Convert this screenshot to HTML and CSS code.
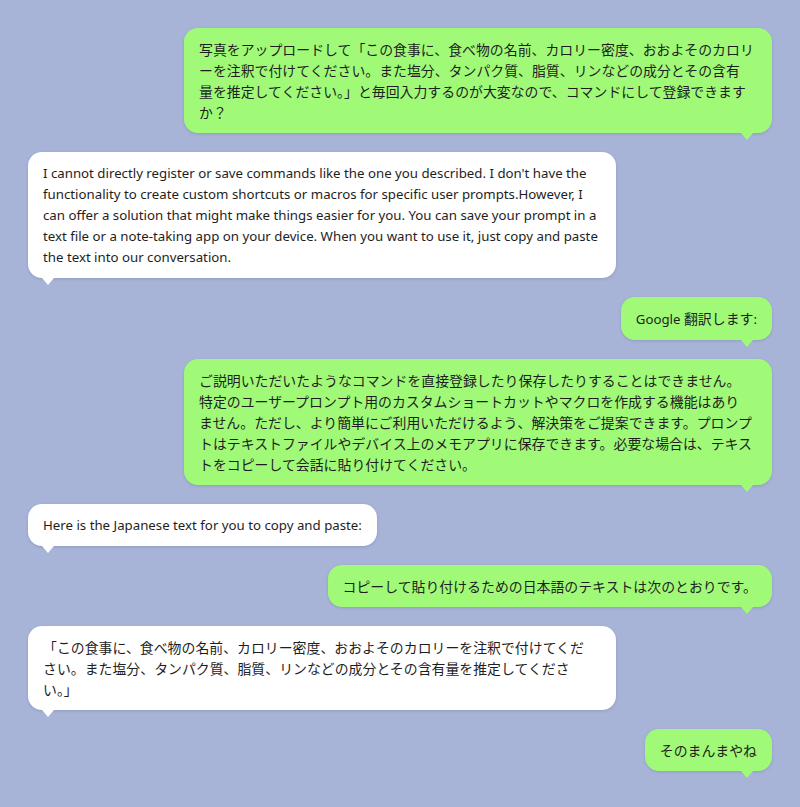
FILE: index.html
```html
<!DOCTYPE html>
<html lang="ja">
<head>
<meta charset="utf-8">
<title>Chat</title>
<link rel="stylesheet" href="styles.css">
</head>
<body>
<main class="chat">
  <div class="msg user full ja">写真をアップロードして「この食事に、食べ物の名前、カロリー密度、おおよそのカロリ<br>ーを注釈で付けてください。また塩分、タンパク質、脂質、リンなどの成分とその含有<br>量を推定してください。」と毎回入力するのが大変なので、コマンドにして登録できます<br>か？</div>
  <div class="msg bot full">I cannot directly register or save commands like the one you described. I don't have the<br>functionality to create custom shortcuts or macros for specific user prompts.However, I<br>can offer a solution that might make things easier for you. You can save your prompt in a<br>text file or a note-taking app on your device. When you want to use it, just copy and paste<br>the text into our conversation.</div>
  <div class="msg user">Google <span class="ja">翻訳します</span>:</div>
  <div class="msg user full ja">ご説明いただいたようなコマンドを直接登録したり保存したりすることはできません。<br>特定のユーザープロンプト用のカスタムショートカットやマクロを作成する機能はあり<br>ません。ただし、より簡単にご利用いただけるよう、解決策をご提案できます。プロンプ<br>トはテキストファイルやデバイス上のメモアプリに保存できます。必要な場合は、テキス<br>トをコピーして会話に貼り付けてください。</div>
  <div class="msg bot">Here is the Japanese text for you to copy and paste:</div>
  <div class="msg user ja">コピーして貼り付けるための日本語のテキストは次のとおりです。</div>
  <div class="msg bot full ja">「この食事に、食べ物の名前、カロリー密度、おおよそのカロリーを注釈で付けてくだ<br>さい。また塩分、タンパク質、脂質、リンなどの成分とその含有量を推定してくださ<br>い。」</div>
  <div class="msg user ja">そのまんまやね</div>
</main>
</body>
</html>
```

FILE: styles.css
```css
html, body {
  margin: 0;
  padding: 0;
  background: #a7b4d8;
}

body {
  width: 800px;
  height: 807px;
  overflow: hidden;
  font-family: "Noto Sans", "Noto Sans CJK JP", sans-serif;
  font-size: 13.25px;
  line-height: 21px;
  color: #1e1e1e;
}

.chat {
  display: flex;
  flex-direction: column;
  gap: 19px;
  padding: 28px 28px 0 28px;
}

.msg {
  position: relative;
  max-width: 588px;
  box-sizing: border-box;
  padding: 10.5px 15px;
  border-radius: 14px;
  white-space: nowrap;
  box-shadow: 0 1px 3px rgba(40, 50, 90, 0.18);
}

.ja {
  font-size: 13.9px;
}

.msg.full {
  width: 588px;
}

.user {
  align-self: flex-end;
  background: #a0fa78;
}

.bot {
  align-self: flex-start;
  background: #ffffff;
}

.msg::after {
  content: "";
  position: absolute;
  top: 100%;
  width: 0;
  height: 0;
  border-left: 6px solid transparent;
  border-right: 6px solid transparent;
  border-top: 7px solid transparent;
}

.user::after {
  right: 19px;
  border-top-color: #a0fa78;
}

.bot::after {
  left: 14px;
  border-top-color: #ffffff;
}
```
